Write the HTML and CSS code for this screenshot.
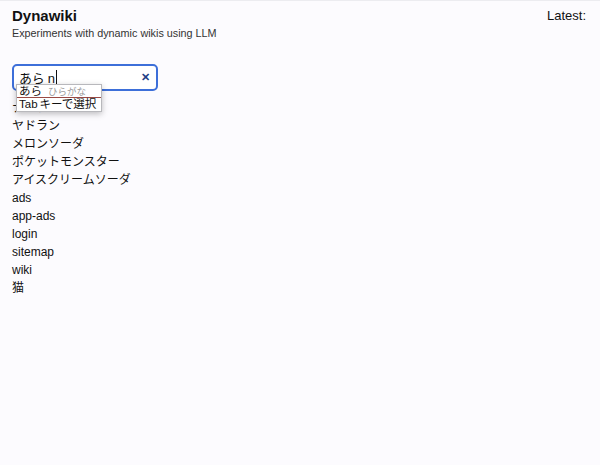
FILE: index.html
```html
<!DOCTYPE html>
<html lang="ja">
<head>
<meta charset="utf-8">
<link rel="stylesheet" href="styles.css">
</head>
<body>
<div class="page">
  <header class="top">
    <div class="brand">
      <h1 class="title">Dynawiki</h1>
      <p class="sub">Experiments with dynamic wikis using LLM</p>
    </div>
    <div class="latest">Latest:</div>
  </header>
  <div class="searchwrap">
    <div class="search">
      <span class="query">あら n</span><span class="caret"></span>
      <span class="clear">✕</span>
    </div>
    <div class="ime">
      <div class="ime-row ime-cand"><span class="ime-main">あら</span><span class="ime-hint">ひらがな</span></div>
      <div class="ime-row ime-tab"><span class="tab">Tab</span>キーで選択</div>
    </div>
  </div>
  <ul class="list">
    <li>ナイフ</li>
    <li>ヤドラン</li>
    <li>メロンソーダ</li>
    <li>ポケットモンスター</li>
    <li>アイスクリームソーダ</li>
    <li>ads</li>
    <li>app-ads</li>
    <li>login</li>
    <li>sitemap</li>
    <li>wiki</li>
    <li>猫</li>
  </ul>
</div>
</body>
</html>
```
FILE: styles.css
```css
html, body {
  margin: 0;
  padding: 0;
  background: #fcfbfe;
}
body {
  font-family: "Liberation Sans", "Noto Sans CJK JP", sans-serif;
  color: #111;
  border-top: 1px solid #ececf0;
  height: 464px;
}
.page {
  padding: 6px 14px 0 12px;
}
.top {
  display: flex;
  justify-content: space-between;
  align-items: flex-start;
}
.title {
  margin: 0;
  font-size: 15px;
  font-weight: bold;
  line-height: 18px;
  color: #111;
}
.sub {
  margin: 1px 0 0;
  font-size: 10.8px;
  line-height: 14px;
  color: #333;
}
.latest {
  font-size: 13px;
  line-height: 16px;
  margin-top: 1px;
}
.searchwrap {
  position: relative;
  margin-top: 24px;
}
.search {
  box-sizing: border-box;
  width: 146px;
  height: 27px;
  border: 2px solid #3d6fd9;
  border-radius: 5px;
  background: #fff;
  display: flex;
  align-items: center;
  padding: 0 0 0 5px;
  font-size: 13px;
}
.query {
  color: #111;
  letter-spacing: -0.3px;
}
.caret {
  display: inline-block;
  width: 1px;
  height: 15px;
  background: #111;
  margin-left: 1px;
}
.clear {
  margin-left: auto;
  margin-right: 6px;
  color: #1f3f86;
  font-size: 11px;
  font-weight: bold;
}
.ime {
  position: absolute;
  left: 4px;
  top: 20px;
  width: 84px;
  background: #fff;
  border: 1px solid #b8b8bc;
  box-shadow: 0 2px 6px rgba(0,0,0,0.25);
  font-size: 11.5px;
}
.ime-row {
  height: 12px;
  line-height: 12px;
  padding: 0 2px;
  white-space: nowrap;
}
.ime-cand {
  border-bottom: 1px solid #9a4a44;
}
.ime-main {
  color: #111;
  margin-right: 6px;
}
.ime-hint {
  color: #9a9a9a;
  font-size: 9.5px;
}
.ime-tab {
  height: 13px;
  line-height: 13px;
  color: #111;
}
.tab {
  margin-right: 2px;
}
.list {
  list-style: none;
  margin: 8px 0 0;
  padding: 0;
  font-size: 12px;
  line-height: 18px;
}
```
